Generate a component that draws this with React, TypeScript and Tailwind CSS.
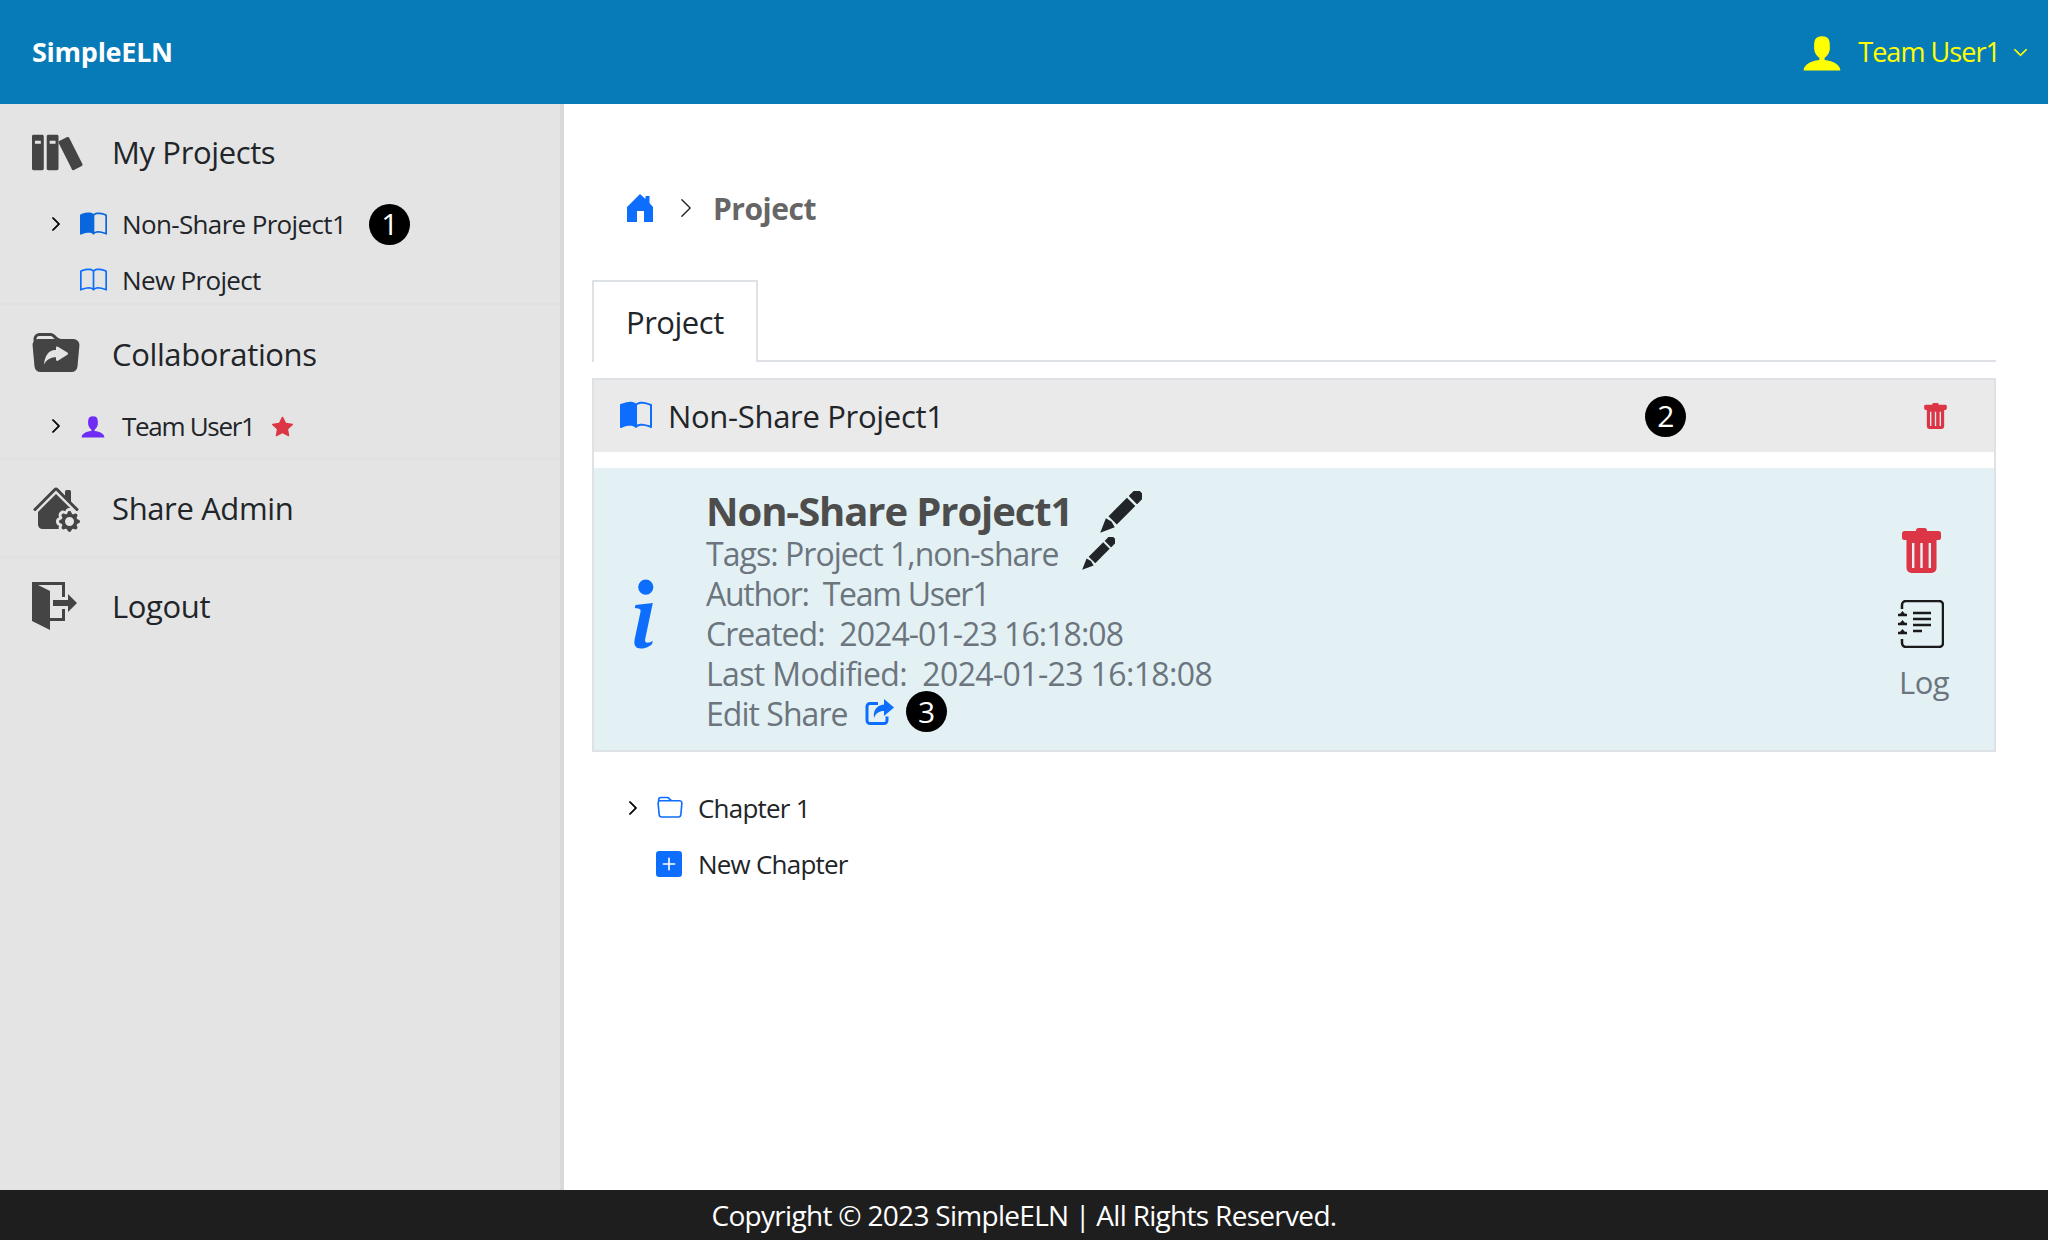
import { ImBooks, ImExit, ImUser } from 'react-icons/im';
import {
  BsBook,
  BsBookHalf,
  BsChevronDown,
  BsChevronRight,
  BsFolder,
  BsFolderSymlinkFill,
  BsHouseGearFill,
  BsInfoLg,
  BsPlusSquareFill,
  BsStarFill,
} from 'react-icons/bs';

function Badge({ n, className = '' }: { n: number; className?: string }) {
  return (
    <span className={`flex h-[41px] w-[41px] shrink-0 items-center justify-center rounded-full bg-black text-[30px] font-medium leading-none text-white ${className}`}>
      {n}
    </span>
  );
}

function TrashIcon({ className }: { className: string }) {
  return (
    <svg viewBox="0 0 39 45" className={className} fill="currentColor">
      <rect x="14" y="0" width="11" height="6" rx="2.5" />
      <rect x="0" y="3" width="39" height="9" rx="2.5" />
      <path
        fillRule="evenodd"
        d="M4.5 11h30v29a5 5 0 0 1-5 5h-20a5 5 0 0 1-5-5zM10 15v25h2.4V15zM18.3 15v25h2.4V15zM26.6 15v25H29V15z"
      />
    </svg>
  );
}

function PencilIcon({ className }: { className: string }) {
  return (
    <svg viewBox="0 0 100 100" className={className} fill="#212529">
      <g transform="rotate(-45 50 50)">
        <polygon points="-20,50 14,35 18,50 14,65" />
        <rect x="22" y="36" width="62" height="28" />
        <rect x="90" y="36" width="27" height="28" rx="2" />
      </g>
    </svg>
  );
}

function HomeIcon() {
  return (
    <svg viewBox="0 0 26 28" className="h-[28px] w-[26px]" fill="#0d6efd">
      <path d="M13 0l5.500 5V2h4v7l3.500 4v15h-9V17h-7v11H0V13z" />
    </svg>
  );
}

function ShareIcon() {
  return (
    <svg viewBox="0 0 29 26" className="h-[26px] w-[29px]" fill="none" stroke="#0d6efd" strokeWidth="3">
      <path d="M13 4.500H5a3 3 0 0 0-3 3v14a3 3 0 0 0 3 3h14a3 3 0 0 0 3-3v-4" />
      <path d="M19 0l10 8.500-10 8.500v-5c-5 0-8 2-10 7-1-8 3-13 10-13.500z" fill="#0d6efd" stroke="none" />
    </svg>
  );
}

function LogIcon() {
  return (
    <svg viewBox="0 0 46 48" className="h-[48px] w-[46px]" fill="none" stroke="#1a1a1a" strokeWidth="2.500">
      <path d="M4 9V5a4 4 0 0 1 4-4h33a4 4 0 0 1 4 4v38a4 4 0 0 1-4 4H8a4 4 0 0 1-4-4v-4" />
      <path d="M0 15h9M0 24h9M0 33h9M15 13h18M15 19h18M15 25h18M15 31h9" />
      <path d="M2 14l2.500-3 2.500 3zM2 23l2.500-3 2.500 3zM2 32l2.500-3 2.500 3z" fill="#1a1a1a" stroke="none" />
    </svg>
  );
}

function MenuHead({ icon, label }: { icon: React.ReactNode; label: string }) {
  return (
    <div className="flex h-[48px] items-center">
      <span className="flex w-[112px] shrink-0 pl-[32px] text-[#444444]">{icon}</span>
      <span className="text-[31px] tracking-[-0.012em] text-[#212529]">{label}</span>
    </div>
  );
}

function SubItem({
  chevron,
  icon,
  label,
  labelClass = 'tracking-[-0.025em]',
  children,
}: {
  chevron?: boolean;
  icon: React.ReactNode;
  label: string;
  labelClass?: string;
  children?: React.ReactNode;
}) {
  return (
    <div className="flex h-[40px] items-center text-[26px] text-[#212529]">
      <span className="flex w-[80px] shrink-0 justify-end pr-[16px]">
        {chevron && <BsChevronRight size={16} className="stroke-1 text-black" />}
      </span>
      <span className="flex w-[42px] shrink-0">{icon}</span>
      <span className={labelClass}>{label}</span>
      {children}
    </div>
  );
}

export default function App() {
  return (
    <div className="flex h-screen flex-col overflow-hidden bg-white font-['Open_Sans',sans-serif] tracking-[-0.03em]">
      <header className="flex h-[104px] shrink-0 items-center justify-between bg-[#077bb8] pl-[32px] pr-[20px]">
        <span className="text-[27px] font-bold tracking-[-0.01em] text-white">SimpleELN</span>
        <div className="flex items-center text-[#ffff00]">
          <ImUser size={42} className="mr-[15px]" />
          <span className="text-[27px] tracking-[-0.035em]">Team User1</span>
          <BsChevronDown size={15} className="ml-[13px] stroke-1" />
        </div>
      </header>

      <div className="flex min-h-0 flex-1">
        <aside className="w-[564px] shrink-0 border-r-4 border-[#d9d9d9] bg-[#e4e4e4]">
          <div className="border-b-2 border-[#e0e0e0] pt-[24px] pb-[3px]">
            <MenuHead icon={<ImBooks size={53} />} label="My Projects" />
            <div className="mt-[28px] flex flex-col gap-[16px]">
              <SubItem chevron icon={<BsBookHalf size={27} className="text-[#0a66dd]" />} label="Non-Share Project1">
                <Badge n={1} className="ml-[23px]" />
              </SubItem>
              <SubItem icon={<BsBook size={27} className="text-[#0d6efd]" />} label="New Project" />
            </div>
          </div>
          <div className="border-b-2 border-[#e0e0e0] pt-[25px] pb-[12px]">
            <MenuHead icon={<BsFolderSymlinkFill size={48} />} label="Collaborations" />
            <div className="mt-[28px]">
              <SubItem
                chevron
                icon={<ImUser size={26} className="text-[#6f2cf5]" />}
                label="Team User1"
                labelClass="tracking-[-0.05em]"
              >
                <BsStarFill size={21} className="ml-[17px] text-[#dc3545]" />
              </SubItem>
            </div>
          </div>
          <div className="border-b-2 border-[#e0e0e0] pt-[24px] pb-[24px]">
            <MenuHead icon={<BsHouseGearFill size={48} />} label="Share Admin" />
          </div>
          <div className="pt-[24px]">
            <MenuHead icon={<ImExit size={48} />} label="Logout" />
          </div>
        </aside>

        <main className="min-w-0 flex-1 pl-[28px] pr-[52px]">
          <nav className="mt-[85px] flex h-[38px] items-center pl-[35px]">
            <HomeIcon />
            <BsChevronRight size={22} className="ml-[22px] text-[#212529]" />
            <span className="ml-[16px] text-[30px] font-bold text-[#666666]">Project</span>
          </nav>

          <div className="mt-[53px] flex h-[82px] border-b-2 border-[#dee2e6]">
            <div className="-mb-[2px] flex w-[166px] items-center border-2 border-b-0 border-[#dee2e6] bg-white pl-[32px] text-[31px] text-[#212529]">
              Project
            </div>
          </div>

          <section className="mt-[16px] border-2 border-[#dee2e6]">
            <div className="flex h-[72px] items-center bg-[#eaeaea] pl-[26px] pr-[47px]">
              <BsBookHalf size={32} className="text-[#0d6efd]" />
              <span className="ml-[16px] text-[31px] tracking-[-0.01em] text-[#212529]">Non-Share Project1</span>
              <Badge n={2} className="ml-auto" />
              <TrashIcon className="ml-[238px] h-[26px] w-[23px] text-[#dc3545]" />
            </div>
            <div className="mt-[16px] flex h-[282px] bg-[#e3f1f5]">
              <div className="flex w-[112px] shrink-0 items-center pl-[3px] pt-[10px]">
                <BsInfoLg size={92} className="text-[#0d6efd]" />
              </div>
              <div className="flex-1 pt-[19px] text-[32px] leading-[40px] tracking-[-0.02em] text-[#6c757d]">
                <div className="flex h-[47px] items-center">
                  <span className="text-[40px] font-bold leading-[44px] tracking-[-0.027em] text-[#4d4d4d]">Non-Share Project1</span>
                  <PencilIcon className="ml-[28px] mt-[2px] h-[42px] w-[42px]" />
                </div>
                <div className="flex h-[40px] items-center">
                  <span className="tracking-[-0.03em]">Tags: Project 1,non-share</span>
                  <PencilIcon className="ml-[23px] -mt-[2px] h-[33px] w-[33px]" />
                </div>
                <div className="tracking-[-0.04em]">Author:&nbsp; Team User1</div>
                <div className="tracking-[-0.03em]">Created:&nbsp; 2024-01-23 16:18:08</div>
                <div>Last Modified:&nbsp; 2024-01-23 16:18:08</div>
                <div className="flex items-center tracking-[-0.03em]">
                  <span>Edit Share</span>
                  <span className="ml-[17px] -mt-[4px]"><ShareIcon /></span>
                  <Badge n={3} className="ml-[12px] -mt-[5px]" />
                </div>
              </div>
              <div className="flex w-[120px] shrink-0 flex-col items-start pl-[28px] pt-[60px] text-[#6c757d]">
                <TrashIcon className="h-[45px] w-[39px] text-[#dc3545]" />
                <div className="-ml-[4px] mt-[27px]"><LogIcon /></div>
                <span className="-ml-[3px] mt-[14px] text-[31px] leading-[40px]">Log</span>
              </div>
            </div>
          </section>

          <div className="mt-[36px] flex h-[40px] items-center pl-[33px] text-[26px] text-[#212529]">
            <BsChevronRight size={16} className="stroke-1 text-black" />
            <BsFolder size={26} className="ml-[16px] text-[#0d6efd]" />
            <span className="ml-[15px] tracking-[-0.03em]">Chapter 1</span>
          </div>
          <div className="mt-[16px] flex h-[40px] items-center pl-[64px] text-[26px] text-[#212529]">
            <BsPlusSquareFill size={26} className="text-[#0d6efd]" />
            <span className="ml-[16px] tracking-[-0.03em]">New Chapter</span>
          </div>
        </main>
      </div>

      <footer className="flex h-[50px] shrink-0 items-center justify-center bg-[#1e1e1e] text-[28px] tracking-[-0.025em] text-white">
        Copyright © 2023 SimpleELN | All Rights Reserved.
      </footer>
    </div>
  );
}
